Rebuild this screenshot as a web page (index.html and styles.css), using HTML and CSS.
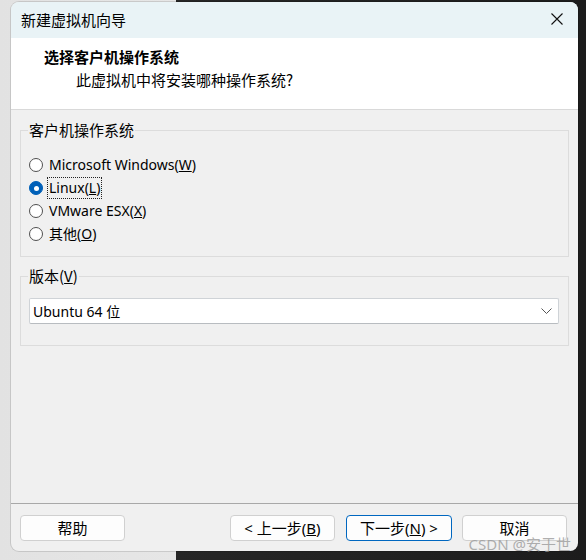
FILE: index.html
```html
<!DOCTYPE html>
<html lang="zh-CN">
<head>
<meta charset="utf-8">
<title>新建虚拟机向导</title>
<link rel="stylesheet" href="styles.css">
</head>
<body>
<div class="desktop">
  <div class="window">
    <div class="titlebar">
      <span class="title">新建虚拟机向导</span>
      <svg class="close" width="12" height="12" viewBox="0 0 12 12"><path d="M0.5 0.5L11.5 11.5M11.5 0.5L0.5 11.5" stroke="#111" stroke-width="1.1" fill="none"/></svg>
    </div>
    <div class="header">
      <div class="h-title">选择客户机操作系统</div>
      <div class="h-sub">此虚拟机中将安装哪种操作系统?</div>
    </div>
    <div class="content">
      <fieldset class="group group-os">
        <legend>客户机操作系统</legend>
        <div class="radios">
          <div class="radio"><span class="dot"></span><span class="lbl">Microsoft Windows(<u>W</u>)</span></div>
          <div class="radio checked"><span class="dot"></span><span class="lbl focus">Linux(<u>L</u>)</span></div>
          <div class="radio"><span class="dot"></span><span class="lbl">VMware ESX(<u>X</u>)</span></div>
          <div class="radio"><span class="dot"></span><span class="lbl">其他(<u>O</u>)</span></div>
        </div>
      </fieldset>
      <fieldset class="group group-ver">
        <legend>版本(<u>V</u>)</legend>
        <div class="select">
          <span>Ubuntu 64 位</span>
          <svg width="11" height="6" viewBox="0 0 11 6"><path d="M0.5 0.5L5.5 5.5L10.5 0.5" stroke="#555" stroke-width="1" fill="none"/></svg>
        </div>
      </fieldset>
    </div>
    <div class="footer">
      <button class="btn">帮助</button>
      <div class="nav">
        <button class="btn">&lt; 上一步(<u>B</u>)</button>
        <button class="btn primary">下一步(<u>N</u>) &gt;</button>
        <button class="btn cancel">取消</button>
      </div>
    </div>
  </div>
  <div class="watermark">CSDN @安于世</div>
</div>
</body>
</html>
```
FILE: styles.css
```css
html, body {
  margin: 0;
  padding: 0;
}
body {
  width: 586px;
  height: 560px;
  overflow: hidden;
  background: linear-gradient(to right, #e2e2e2 0, #e6e6e6 176px, #262626 176px, #1c1c1c 586px);
  font-family: "Noto Sans", "Noto Sans CJK SC", sans-serif;
  color: #000;
}
.desktop {
  position: relative;
  width: 586px;
  height: 560px;
  padding: 2px 8px 9px 11px;
  box-sizing: border-box;
}
.window {
  width: 567px;
  height: 549px;
  background: #f0f0f0;
  border-radius: 8px;
  overflow: hidden;
  display: flex;
  flex-direction: column;
  box-shadow: 0 0 0 1px rgba(0,0,0,0.12);
}
.titlebar {
  height: 36px;
  flex: none;
  background: #e9f3f6;
  display: flex;
  align-items: center;
  justify-content: space-between;
  padding: 0 15px 0 10px;
}
.title {
  font-family: "Noto Sans CJK SC", sans-serif;
  font-size: 15px;
  line-height: 20px;
  margin-top: -1px;
}
.close { margin-top: -2px; }
.header {
  height: 71px;
  flex: none;
  background: #fff;
  border-bottom: 1px solid #d9d9d9;
  padding-left: 33px;
  box-sizing: content-box;
}
.h-title {
  font-family: "Noto Sans CJK SC", sans-serif;
  font-weight: 700;
  font-size: 15px;
  line-height: 20px;
  margin-top: 9px;
}
.h-sub {
  font-family: "Noto Sans CJK SC", sans-serif;
  font-size: 15px;
  line-height: 20px;
  margin-top: 3px;
  padding-left: 32px;
}
.content {
  flex: 1;
  padding: 10px 9px 0 9px;
  display: flex;
  flex-direction: column;
  gap: 9px;
}
.group {
  margin: 0;
  border: 1px solid #dcdcdc;
  padding: 0 9px 0 8px;
  min-width: 0;
}
.group legend {
  font-family: "Noto Sans CJK SC", sans-serif;
  font-size: 15px;
  line-height: 20px;
  padding: 0 1px;
  margin-left: -1px;
}
.group-os { height: 137px; box-sizing: border-box; }
.radios {
  padding-top: 14px;
  display: flex;
  flex-direction: column;
  gap: 1px;
}
.radio {
  display: flex;
  align-items: center;
  height: 22px;
}
.dot {
  width: 14px;
  height: 14px;
  border: 1px solid #505050;
  border-radius: 50%;
  box-sizing: border-box;
  margin-right: 5px;
  flex: none;
  background: #fff;
}
.checked .dot {
  background: #0060b8;
  border-color: #0060b8;
  position: relative;
}
.checked .dot::after {
  content: "";
  position: absolute;
  left: 3.5px;
  top: 3.5px;
  width: 5px;
  height: 5px;
  border-radius: 50%;
  background: #fff;
}
.lbl {
  font-family: "Noto Sans", "Noto Sans CJK SC", sans-serif;
  font-size: 14px;
  line-height: 20px;
  padding: 0 1px;
  margin-left: -1px;
  border: 1px dotted transparent;
}
.lbl.focus { border-color: #222; }
.group-ver { height: 80px; box-sizing: border-box; }
.select {
  margin-top: 12px;
  height: 26px;
  box-sizing: border-box;
  background: #fff;
  border: 1px solid #cfd3d7;
  border-bottom-color: #b8bcc0;
  border-radius: 2px;
  display: flex;
  align-items: center;
  justify-content: space-between;
  padding: 0 6px 0 3px;
  font-size: 14px;
}
.footer {
  flex: none;
  border-top: 1px solid #a8a8a8;
  padding: 11px 11px 10px 9px;
  display: flex;
  justify-content: space-between;
}
.nav { display: flex; gap: 11px; }
.nav .cancel { margin-left: -1px; }
.btn {
  width: 105px;
  height: 26px;
  border: 1px solid #d0d0d0;
  border-radius: 4px;
  background: #fdfdfd;
  font-family: "Noto Sans", "Noto Sans CJK SC", sans-serif;
  font-size: 15px;
  line-height: 20px;
  padding: 0;
  color: #000;
}
.btn.primary { border-color: #0067c0; width: 106px; }
.watermark {
  position: absolute;
  right: 15px;
  bottom: 6px;
  font-family: "Noto Sans", "Noto Sans CJK SC", sans-serif;
  font-size: 15px;
  line-height: 20px;
  color: rgba(150,150,150,0.75);
}
```
